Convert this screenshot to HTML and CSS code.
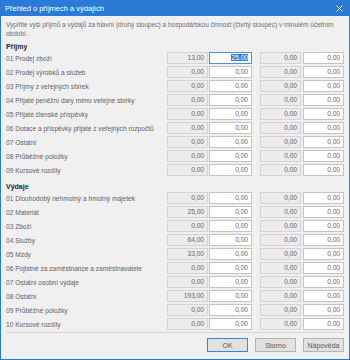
FILE: index.html
```html
<!DOCTYPE html>
<html lang="cs">
<head>
  <meta charset="UTF-8" />
  <title>Přehled o příjmech a výdajích</title>
  <link rel="stylesheet" href="styles.css">
</head>
<body>
  <div class="window">
    <div class="titlebar">
      <span class="title">Přehled o příjmech a výdajích</span>
      <svg class="close" width="7" height="7" viewBox="0 0 7 7">
        <path d="M0.5 0.5 L6.5 6.5 M6.5 0.5 L0.5 6.5" stroke="#fff" stroke-width="0.9" fill="none"/>
      </svg>
    </div>

    <div class="content">
      <p class="desc">Vyplňte výši příjmů a výdajů za hlavní (druhý sloupec) a hospodářskou činnost (čtvrtý sloupec) v minulém účetním<br>období.</p>

      <h3 class="heading">Příjmy</h3>
      <div class="rows">
        <div class="row"><span class="label">01 Prodej zboží</span><span class="box ro b1">13,00</span><span class="box ed b2 sel"><span class="hl">25,00</span></span><span class="box ro b3">0,00</span><span class="box ed b4">0,00</span></div>
        <div class="row"><span class="label">02 Prodej výrobků a služeb</span><span class="box ro b1">0,00</span><span class="box ed b2">0,00</span><span class="box ro b3">0,00</span><span class="box ed b4">0,00</span></div>
        <div class="row"><span class="label">03 Příjmy z veřejných sbírek</span><span class="box ro b1">0,00</span><span class="box ed b2">0,00</span><span class="box ro b3">0,00</span><span class="box ed b4">0,00</span></div>
        <div class="row"><span class="label">04 Přijaté peněžní dary mimo veřejné sbírky</span><span class="box ro b1">0,00</span><span class="box ed b2">0,00</span><span class="box ro b3">0,00</span><span class="box ed b4">0,00</span></div>
        <div class="row"><span class="label">05 Přijaté členské příspěvky</span><span class="box ro b1">0,00</span><span class="box ed b2">0,00</span><span class="box ro b3">0,00</span><span class="box ed b4">0,00</span></div>
        <div class="row"><span class="label">06 Dotace a příspěvky přijaté z veřejných rozpočtů</span><span class="box ro b1">0,00</span><span class="box ed b2">0,00</span><span class="box ro b3">0,00</span><span class="box ed b4">0,00</span></div>
        <div class="row"><span class="label">07 Ostatní</span><span class="box ro b1">0,00</span><span class="box ed b2">0,00</span><span class="box ro b3">0,00</span><span class="box ed b4">0,00</span></div>
        <div class="row"><span class="label">08 Průběžné položky</span><span class="box ro b1">0,00</span><span class="box ed b2">0,00</span><span class="box ro b3">0,00</span><span class="box ed b4">0,00</span></div>
        <div class="row"><span class="label">09 Kursové rozdíly</span><span class="box ro b1">0,00</span><span class="box ed b2">0,00</span><span class="box ro b3">0,00</span><span class="box ed b4">0,00</span></div>
      </div>

      <h3 class="heading second">Výdaje</h3>
      <div class="rows">
        <div class="row"><span class="label">01 Dlouhodobý nehmotný a hmotný majetek</span><span class="box ro b1">0,00</span><span class="box ed b2">0,00</span><span class="box ro b3">0,00</span><span class="box ed b4">0,00</span></div>
        <div class="row"><span class="label">02 Materiál</span><span class="box ro b1">25,00</span><span class="box ed b2">0,00</span><span class="box ro b3">0,00</span><span class="box ed b4">0,00</span></div>
        <div class="row"><span class="label">03 Zboží</span><span class="box ro b1">0,00</span><span class="box ed b2">0,00</span><span class="box ro b3">0,00</span><span class="box ed b4">0,00</span></div>
        <div class="row"><span class="label">04 Služby</span><span class="box ro b1">64,00</span><span class="box ed b2">0,00</span><span class="box ro b3">0,00</span><span class="box ed b4">0,00</span></div>
        <div class="row"><span class="label">05 Mzdy</span><span class="box ro b1">33,00</span><span class="box ed b2">0,00</span><span class="box ro b3">0,00</span><span class="box ed b4">0,00</span></div>
        <div class="row"><span class="label">06 Pojistné za zaměstnance a zaměstnavatele</span><span class="box ro b1">0,00</span><span class="box ed b2">0,00</span><span class="box ro b3">0,00</span><span class="box ed b4">0,00</span></div>
        <div class="row"><span class="label">07 Ostatní osobní výdaje</span><span class="box ro b1">0,00</span><span class="box ed b2">0,00</span><span class="box ro b3">0,00</span><span class="box ed b4">0,00</span></div>
        <div class="row"><span class="label">08 Ostatní</span><span class="box ro b1">193,00</span><span class="box ed b2">0,00</span><span class="box ro b3">0,00</span><span class="box ed b4">0,00</span></div>
        <div class="row"><span class="label">09 Průběžné položky</span><span class="box ro b1">0,00</span><span class="box ed b2">0,00</span><span class="box ro b3">0,00</span><span class="box ed b4">0,00</span></div>
        <div class="row"><span class="label">10 Kursové rozdíly</span><span class="box ro b1">0,00</span><span class="box ed b2">0,00</span><span class="box ro b3">0,00</span><span class="box ed b4">0,00</span></div>
      </div>

      <div class="separator"></div>

      <div class="buttons">
        <button class="btn default">OK</button>
        <button class="btn">Storno</button>
        <button class="btn">Nápověda</button>
      </div>
    </div>
  </div>
</body>
</html>
```

FILE: styles.css
```css
body {
  margin: 0;
  font-family: 'Liberation Sans', Arial, sans-serif;
  font-size: 6.6px;
}

.window {
  width: 350px;
  height: 360px;
  box-sizing: border-box;
  border: 1px solid #2b7bd6;
  border-top: none;
  background: #f0f0f0;
}

.titlebar {
  height: 16px;
  background: #2b7bd6;
  display: flex;
  align-items: center;
  justify-content: space-between;
  padding: 0 6px 0 4px;
}

.title {
  color: #fff;
  font-size: 7.5px;
}

.content {
  padding: 0 5px;
}

.desc {
  margin: 4px 0 0;
  font-size: 6.5px;
  color: #6f6f6f;
  line-height: 9px;
  white-space: nowrap;
}

.heading {
  margin: 4px 0 1px;
  font-size: 7px;
  line-height: 9px;
  font-weight: bold;
  color: #262626;
}

.heading.second {
  margin-top: 6px;
}

.rows {
  display: flex;
  flex-direction: column;
  gap: 2px;
}

.row {
  display: flex;
  align-items: center;
  height: 12px;
}

.label {
  flex: 1;
  color: #636363;
  line-height: 12px;
  padding-top: 2px;
  white-space: nowrap;
  overflow: hidden;
}

.box {
  box-sizing: border-box;
  height: 12px;
  line-height: 10px;
  text-align: right;
  padding-right: 3px;
  color: #666;
  border: 1px solid #d3d3d3;
}

.ro {
  background: #ececec;
}

.ed {
  background: #fff;
  border-color: #c4c4c4;
}

.b1 { width: 41px; }
.b2 { width: 43px; margin-left: 1px; }
.b3 { width: 41px; margin-left: 8px; }
.b4 { width: 41px; margin-left: 2px; }

.sel {
  border-color: #4f8fdc;
}

.hl {
  background: #2f7fd9;
  color: #fff;
}

.separator {
  height: 1px;
  background: #d6d6d6;
  margin: 2px 0 0;
}

.buttons {
  display: flex;
  justify-content: flex-end;
  gap: 7px;
  margin-top: 5px;
}

.btn {
  width: 41px;
  height: 14px;
  padding: 0;
  font-family: inherit;
  font-size: 7px;
  color: #595959;
  background: #e1e1e1;
  border: 1px solid #b4b4b4;
}

.btn.default {
  border-color: #3a84da;
}
```
